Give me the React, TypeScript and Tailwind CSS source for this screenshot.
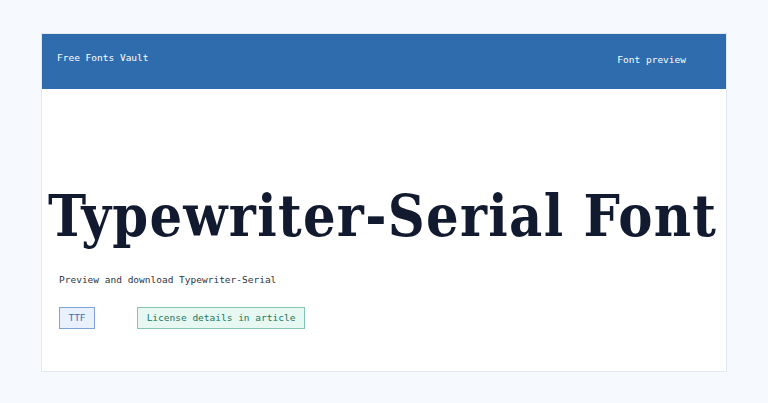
export default function App() {
  return (
    <div className="min-h-screen bg-[#f6f9fd] px-[41px] pt-[33px]" style={{ fontFamily: '"DejaVu Sans Mono", "Liberation Mono", monospace' }}>
      <div className="w-[686px] border border-[#e3e8f0] bg-white">
        <header className="flex h-[55px] items-center justify-between bg-[#2f6cad] pl-[15px] pr-[40px] text-[9.5px] text-white">
          <span className="-mt-[6px]">Free Fonts Vault</span>
          <span className="-mt-[3px]">Font preview</span>
        </header>
        <main className="h-[282px] px-[17px] pt-[98px]">
          <h1
            className="-ml-[11px] whitespace-nowrap text-[57px] font-bold leading-none tracking-[1.3px] text-[#111a2e]"
            style={{ fontFamily: '"DejaVu Serif", serif', fontStretch: "condensed" }}
          >
            Typewriter-Serial Font
          </h1>
          <p className="mt-[29px] text-[9.5px] text-[#2b3447]">Preview and download Typewriter-Serial</p>
          <div className="mt-[20px] flex items-center gap-[42px]">
            <span className="flex h-[22px] w-[36px] items-center justify-center border border-[#7ea5d6] bg-[#e8f1fd] text-[9.5px] text-[#3a70b2]">
              TTF
            </span>
            <span className="flex h-[22px] w-[168px] items-center justify-center border border-[#86c4b4] bg-[#e7f7f1] text-[9.5px] text-[#18785f]">
              License details in article
            </span>
          </div>
        </main>
      </div>
    </div>
  );
}
